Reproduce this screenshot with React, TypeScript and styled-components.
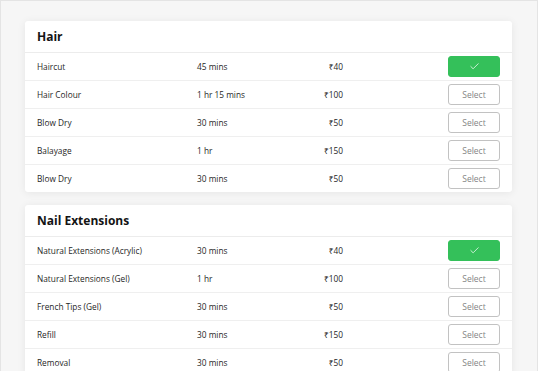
import styled, { createGlobalStyle } from 'styled-components';
import { Check } from 'lucide-react';

interface Service {
  name: string;
  duration: string;
  price: string;
  selected?: boolean;
}

interface Section {
  title: string;
  services: Service[];
}

const sections: Section[] = [
  {
    title: 'Hair',
    services: [
      { name: 'Haircut', duration: '45 mins', price: '₹40', selected: true },
      { name: 'Hair Colour', duration: '1 hr 15 mins', price: '₹100' },
      { name: 'Blow Dry', duration: '30 mins', price: '₹50' },
      { name: 'Balayage', duration: '1 hr', price: '₹150' },
      { name: 'Blow Dry', duration: '30 mins', price: '₹50' },
    ],
  },
  {
    title: 'Nail Extensions',
    services: [
      { name: 'Natural Extensions (Acrylic)', duration: '30 mins', price: '₹40', selected: true },
      { name: 'Natural Extensions (Gel)', duration: '1 hr', price: '₹100' },
      { name: 'French Tips (Gel)', duration: '30 mins', price: '₹50' },
      { name: 'Refill', duration: '30 mins', price: '₹150' },
      { name: 'Removal', duration: '30 mins', price: '₹50' },
    ],
  },
];

const GlobalStyle = createGlobalStyle`
  html, body {
    margin: 0;
    padding: 0;
    height: 100%;
    overflow: hidden;
    background: #ffffff;
    font-family: "Open Sans", "Noto Sans", sans-serif;
  }
  #root {
    height: 100%;
  }
`;

const Frame = styled.div`
  box-sizing: border-box;
  width: 538px;
  height: 100%;
  border: 1px solid #e4e4e4;
  border-bottom: none;
  background: #f6f6f6;
  padding: 20px 25px 0 24px;
  display: flex;
  flex-direction: column;
  gap: 13px;
`;

const Card = styled.section`
  background: #ffffff;
  border-radius: 3px;
  box-shadow: 0 1px 8px rgba(0, 0, 0, 0.07);
  flex-shrink: 0;
`;

const CardHeader = styled.h2`
  margin: 0;
  height: 31px;
  display: flex;
  align-items: center;
  padding: 0 12px;
  font-size: 12px;
  font-weight: 700;
  color: #141414;
  border-bottom: 1px solid #ececec;
`;

const Row = styled.div`
  height: 27px;
  display: grid;
  grid-template-columns: 160px 100px 46px 1fr 52px;
  align-items: center;
  padding: 0 12px;
  font-size: 8.3px;
  color: #262626;
  border-bottom: 1px solid #efefef;

  &:last-child {
    border-bottom: none;
  }
`;

const Price = styled.span`
  text-align: right;
`;

const SelectButton = styled.button<{ $selected?: boolean }>`
  grid-column: 5;
  box-sizing: border-box;
  height: 21px;
  width: 52px;
  padding: 0;
  border-radius: 3px;
  display: flex;
  align-items: center;
  justify-content: center;
  font-family: inherit;
  font-size: 8.5px;
  color: #858585;
  background: ${p => (p.$selected ? '#34c05a' : '#ffffff')};
  border: 1px solid ${p => (p.$selected ? '#34c05a' : '#c2c2c2')};
`;

const ServiceRow = ({ service }: { service: Service }) => (
  <Row>
    <span>{service.name}</span>
    <span>{service.duration}</span>
    <Price>{service.price}</Price>
    <SelectButton $selected={service.selected}>
      {service.selected ? <Check size={11} color="#ffffff" strokeWidth={1.6} /> : 'Select'}
    </SelectButton>
  </Row>
);

const App = () => (
  <>
    <GlobalStyle />
    <Frame>
      {sections.map(section => (
        <Card key={section.title}>
          <CardHeader>{section.title}</CardHeader>
          {section.services.map((s, i) => (
            <ServiceRow key={i} service={s} />
          ))}
        </Card>
      ))}
    </Frame>
  </>
);

export default App;
